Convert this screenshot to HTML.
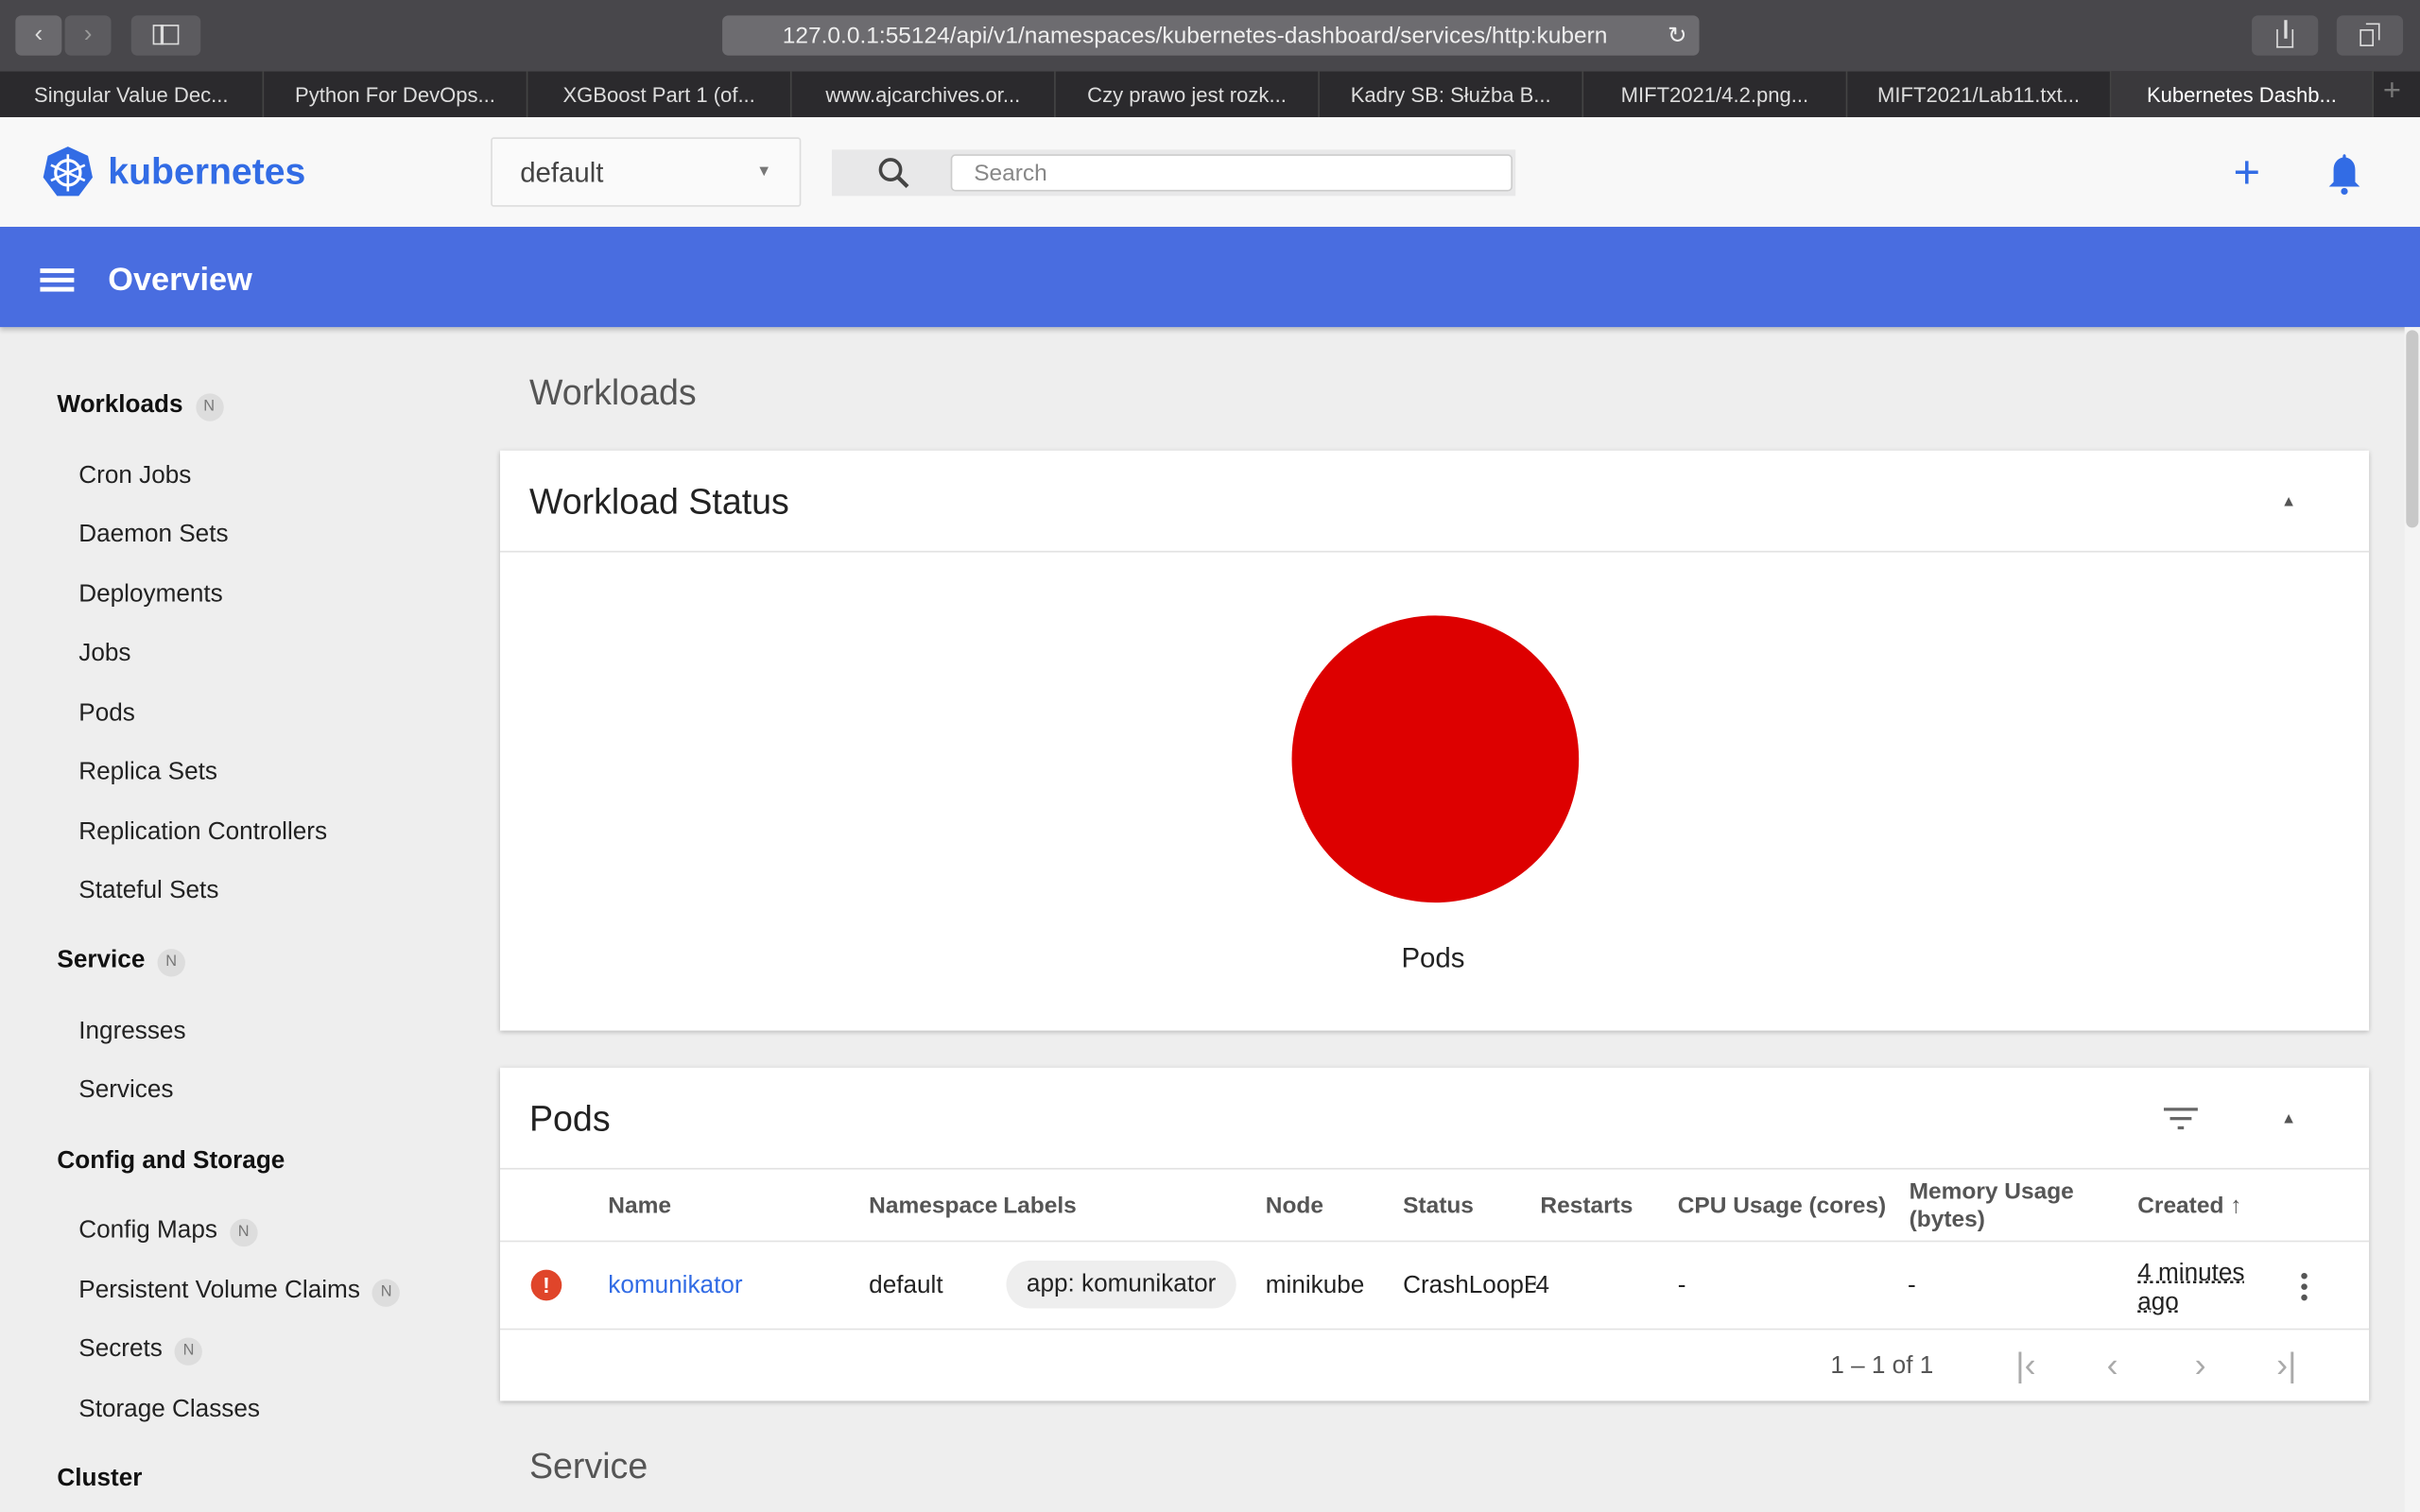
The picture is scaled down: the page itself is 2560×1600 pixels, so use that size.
<!DOCTYPE html>
<html><head><meta charset="utf-8"><style>
*{box-sizing:border-box;margin:0;padding:0}
html,body{width:2560px;height:1600px;overflow:hidden;background:#eeeeee}
#w{width:1568px;height:980px;transform:scale(1.632653);transform-origin:0 0;position:relative;font-family:"Liberation Sans",sans-serif;background:#eeeeee}
.a{position:absolute}
.tab{position:absolute;top:46px;height:30px;width:171px;border-right:1px solid #444;color:#ddd;font-size:13.5px;text-align:center;line-height:31px}
.si{position:absolute;left:51px;font-size:16px;color:#222}
.sh{position:absolute;left:37px;font-size:16px;font-weight:bold;color:#111}
.n{display:inline-block;width:18px;height:18px;border-radius:50%;background:#ddd;color:#777;font-size:10px;font-weight:normal;text-align:center;line-height:18px;margin-left:8px;vertical-align:1px}
.card{position:absolute;left:324px;width:1211px;background:#fff;box-shadow:0 1px 3px rgba(0,0,0,.25)}
.th{position:absolute;top:773px;font-size:15px;color:#555;font-weight:bold}
.td{position:absolute;top:825px;font-size:16px;color:#222}
</style></head><body><div id="w">
<div class="a" style="left:0;top:0;width:1568px;height:46px;background:#48474b"></div>
<div class="a" style="left:10px;top:10px;width:30px;height:26px;background:#6a696d;border-radius:4px;color:#ddd;text-align:center;line-height:26px;font-size:16px">&#x2039;</div>
<div class="a" style="left:42px;top:10px;width:30px;height:26px;background:#5c5b5f;border-radius:4px;color:#999;text-align:center;line-height:26px;font-size:16px">&#x203A;</div>
<div class="a" style="left:85px;top:10px;width:45px;height:26px;background:#5c5b5f;border-radius:4px"><div class="a" style="left:14px;top:6px;width:17px;height:13px;border:1.5px solid #ddd"></div><div class="a" style="left:19px;top:6px;width:1.5px;height:13px;background:#ddd"></div></div>
<div class="a" style="left:468px;top:10px;width:633px;height:26px;background:#6d6c70;border-radius:4px;color:#eee;font-size:15px;line-height:27px;padding-left:39px;overflow:hidden;white-space:nowrap">127.0.0.1:55124/api/v1/namespaces/kubernetes-dashboard/services/http:kubern<span style="position:absolute;right:8px;top:0">&#x21BB;</span></div>
<div class="a" style="left:1459px;top:10px;width:43px;height:26px;background:#5c5b5f;border-radius:4px"><div class="a" style="left:16px;top:9px;width:11px;height:12px;border:1.5px solid #ddd;border-top:none"></div><div class="a" style="left:21px;top:3px;width:1.5px;height:12px;background:#ddd"></div></div>
<div class="a" style="left:1514px;top:10px;width:43px;height:26px;background:#5c5b5f;border-radius:4px"><div class="a" style="left:15px;top:9px;width:9px;height:11px;border:1.5px solid #ddd"></div><div class="a" style="left:19px;top:5px;width:9px;height:11px;border-top:1.5px solid #ddd;border-right:1.5px solid #ddd"></div></div>
<div class="a" style="left:0;top:46px;width:1568px;height:30px;background:#2b2a2d"></div>
<div class="tab" style="left:0">Singular Value Dec...</div>
<div class="tab" style="left:171px">Python For DevOps...</div>
<div class="tab" style="left:342px">XGBoost Part 1 (of...</div>
<div class="tab" style="left:513px">www.ajcarchives.or...</div>
<div class="tab" style="left:684px">Czy prawo jest rozk...</div>
<div class="tab" style="left:855px">Kadry SB: Służba B...</div>
<div class="tab" style="left:1026px">MIFT2021/4.2.png...</div>
<div class="tab" style="left:1197px">MIFT2021/Lab11.txt...</div>
<div class="tab" style="left:1368px;width:170px;background:#3a393c;color:#fff">Kubernetes Dashb...</div>
<div class="a" style="left:1544px;top:48px;color:#777;font-size:20px">+</div>
<div class="a" style="left:0;top:76px;width:1568px;height:71px;background:#f8f8f8"></div>
<svg class="a" style="left:26px;top:94px" width="36" height="36" viewBox="0 0 36 36"><polygon points="18,1 31,7 34,21 25,33 11,33 2,21 5,7" fill="#326ce5"/><circle cx="18" cy="18" r="8" fill="none" stroke="#fff" stroke-width="2"/><g stroke="#fff" stroke-width="1.6"><line x1="18" y1="6" x2="18" y2="30"/><line x1="7" y1="13" x2="29" y2="23"/><line x1="29" y1="13" x2="7" y2="23"/></g></svg>
<div class="a" style="left:70px;top:98px;color:#326ce5;font-size:24px;font-weight:bold">kubernetes</div>
<div class="a" style="left:318px;top:89px;width:201px;height:45px;background:#fafafa;border:1px solid #ddd;border-radius:2px;font-size:18px;color:#444;padding:12px 18px">default<span style="position:absolute;right:18px;top:16px;font-size:10px;color:#777">&#9660;</span></div>
<div class="a" style="left:539px;top:97px;width:443px;height:30px;background:#e8e8e9"></div>
<svg class="a" style="left:568px;top:101px" width="22" height="22" viewBox="0 0 22 22"><circle cx="9" cy="9" r="6.5" fill="none" stroke="#444" stroke-width="2.2"/><line x1="13.5" y1="13.5" x2="20" y2="20" stroke="#444" stroke-width="2.6"/></svg>
<div class="a" style="left:616px;top:100px;width:364px;height:24px;background:#fff;border:1px solid #ccc;border-radius:3px;font-size:15px;color:#888;padding:3px 14px">Search</div>
<div class="a" style="left:1447px;top:96px;color:#326ce5;font-size:30px;line-height:34px">+</div>
<svg class="a" style="left:1508px;top:99px" width="22" height="28" viewBox="0 0 22 28"><path d="M11 1 C10 1 10 2 10 3 C6 4 4 7 4 11 L4 19 L1 22 L21 22 L18 19 L18 11 C18 7 16 4 12 3 C12 2 12 1 11 1Z" fill="#326ce5"/><circle cx="11" cy="25" r="2.2" fill="#326ce5"/></svg>
<div class="a" style="left:0;top:147px;width:1568px;height:65px;background:#496de0;box-shadow:0 2px 3px rgba(0,0,0,.2)"></div>
<div class="a" style="left:26px;top:174px;width:22px;height:2.5px;background:#fff;box-shadow:0 6px 0 #fff,0 12px 0 #fff"></div>
<div class="a" style="left:70px;top:170px;color:#fff;font-size:21px;font-weight:bold">Overview</div>
<div class="a" style="left:1558px;top:212px;width:10px;height:768px;background:#f4f4f4"></div>
<div class="a" style="left:1559px;top:214px;width:8px;height:128px;background:#c8c8c8;border-radius:4px"></div>
<div class="sh" style="top:254px">Workloads<span class="n">N</span></div>
<div class="si" style="top:300px">Cron Jobs</div>
<div class="si" style="top:338px">Daemon Sets</div>
<div class="si" style="top:377px">Deployments</div>
<div class="si" style="top:415px">Jobs</div>
<div class="si" style="top:454px">Pods</div>
<div class="si" style="top:492px">Replica Sets</div>
<div class="si" style="top:531px">Replication Controllers</div>
<div class="si" style="top:569px">Stateful Sets</div>
<div class="sh" style="top:614px">Service<span class="n">N</span></div>
<div class="si" style="top:660px">Ingresses</div>
<div class="si" style="top:698px">Services</div>
<div class="sh" style="top:744px">Config and Storage</div>
<div class="si" style="top:789px">Config Maps<span class="n">N</span></div>
<div class="si" style="top:828px">Persistent Volume Claims<span class="n">N</span></div>
<div class="si" style="top:866px">Secrets<span class="n">N</span></div>
<div class="si" style="top:905px">Storage Classes</div>
<div class="sh" style="top:950px">Cluster</div>
<div class="a" style="left:343px;top:241px;font-size:23px;color:#555">Workloads</div>
<div class="card" style="top:292px;height:376px"></div>
<div class="a" style="left:324px;top:357px;width:1211px;height:1px;background:#e2e2e2"></div>
<div class="a" style="left:343px;top:312px;font-size:23px;color:#222">Workload Status</div>
<div class="a" style="left:1478px;top:320px;font-size:10px;color:#555">&#9650;</div>
<div class="a" style="left:837px;top:399px;width:186px;height:186px;border-radius:50%;background:#dd0000"></div>
<div class="a" style="left:908px;top:611px;font-size:18px;color:#222">Pods</div>
<div class="card" style="top:692px;height:216px"></div>
<div class="a" style="left:324px;top:757px;width:1211px;height:1px;background:#e2e2e2"></div>
<div class="a" style="left:324px;top:804px;width:1211px;height:1px;background:#e2e2e2"></div>
<div class="a" style="left:324px;top:861px;width:1211px;height:1px;background:#e2e2e2"></div>
<div class="a" style="left:343px;top:712px;font-size:23px;color:#222">Pods</div>
<div class="a" style="left:1402px;top:718px;width:22px;height:2px;background:#666"></div>
<div class="a" style="left:1406px;top:724px;width:14px;height:2px;background:#666"></div>
<div class="a" style="left:1411px;top:730px;width:4px;height:2px;background:#666"></div>
<div class="a" style="left:1478px;top:720px;font-size:10px;color:#555">&#9650;</div>
<div class="th" style="left:394px">Name</div>
<div class="th" style="left:563px;width:86px;overflow:hidden;white-space:nowrap">Namespace</div>
<div class="th" style="left:650px">Labels</div>
<div class="th" style="left:820px">Node</div>
<div class="th" style="left:909px">Status</div>
<div class="th" style="left:998px">Restarts</div>
<div class="th" style="left:1087px">CPU Usage (cores)</div>
<div class="th" style="left:1237px;top:764px;line-height:18px">Memory Usage<br>(bytes)</div>
<div class="th" style="left:1385px">Created &#8593;</div>
<div class="a" style="left:344px;top:823px;width:20px;height:20px;border-radius:50%;background:#e0452a;color:#fff;font-size:14px;font-weight:bold;text-align:center;line-height:20px">!</div>
<div class="td" style="left:394px;color:#326ce5">komunikator</div>
<div class="td" style="left:563px">default</div>
<div class="a" style="left:652px;top:817px;width:149px;height:31px;border-radius:16px;background:#eeeeee;font-size:16px;color:#222;text-align:center;line-height:32px">app: komunikator</div>
<div class="td" style="left:820px">minikube</div>
<div class="td" style="left:909px"><span style="display:inline-block;width:86px;overflow:hidden;white-space:nowrap;vertical-align:top">CrashLoopBackOff</span>4</div>
<div class="td" style="left:1087px">-</div>
<div class="td" style="left:1236px">-</div>
<div class="td" style="left:1385px;top:816px;line-height:19px;text-decoration:underline dotted">4 minutes<br>ago</div>
<div class="a" style="left:1491px;top:825px;width:4px;height:4px;border-radius:50%;background:#555;box-shadow:0 7px 0 #555,0 14px 0 #555"></div>
<div class="a" style="left:1186px;top:877px;font-size:16px;color:#555">1 – 1 of 1</div>
<div class="a" style="left:1306px;top:872px;font-size:22px;color:#aaa">|&#x2039;</div>
<div class="a" style="left:1365px;top:872px;font-size:22px;color:#aaa">&#x2039;</div>
<div class="a" style="left:1422px;top:872px;font-size:22px;color:#aaa">&#x203A;</div>
<div class="a" style="left:1475px;top:872px;font-size:22px;color:#aaa">&#x203A;|</div>
<div class="a" style="left:343px;top:937px;font-size:23px;color:#555">Service</div>
</div></body></html>
